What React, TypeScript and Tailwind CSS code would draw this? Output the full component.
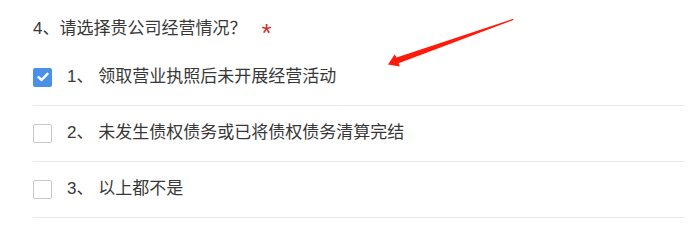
import { useState } from "react";

const options = [
  { id: 1, label: "领取营业执照后未开展经营活动" },
  { id: 2, label: "未发生债权债务或已将债权债务清算完结" },
  { id: 3, label: "以上都不是" },
];

function CheckBox({ checked }: { checked: boolean }) {
  if (checked) {
    return (
      <span className="flex h-[19px] w-[19px] shrink-0 items-center justify-center rounded-[2px] bg-[#4a90e6]">
        <svg width="12" height="10" viewBox="0 0 12 10" fill="none">
          <path d="M1.5 5.2 L4.6 8 L10.5 1.8" stroke="#fff" strokeWidth="2.4" strokeLinecap="round" strokeLinejoin="round" />
        </svg>
      </span>
    );
  }
  return <span className="h-[19px] w-[19px] shrink-0 rounded-[2px] border border-[#c9c9c9] bg-white" />;
}

export default function App() {
  const [selected, setSelected] = useState<number[]>([1]);

  const toggle = (id: number) => {
    setSelected((prev) => (prev.includes(id) ? prev.filter((x) => x !== id) : [...prev, id]));
  };

  return (
    <div
      className="relative h-[238px] w-[697px] bg-white text-[#383838]"
      style={{ fontFamily: '"Liberation Sans", "Noto Sans CJK SC", sans-serif' }}
    >
      <div className="ml-[33px] mr-[12px] pt-[17px]">
        {/* Question title */}
        <div className="flex h-[24px] items-center text-[17px] leading-[24px]">
          <span>4、请选择贵公司经营情况？</span>
          <span className="ml-[15px] mt-[8px] text-[26px] leading-none text-[#d92a2a]">*</span>
        </div>

        {/* Options */}
        <div className="mt-[9px]">
          {options.map((opt) => (
            <div
              key={opt.id}
              className="flex h-[56px] cursor-pointer items-center border-b border-[#e9e9e9] pb-[1px]"
              onClick={() => toggle(opt.id)}
            >
              <CheckBox checked={selected.includes(opt.id)} />
              <span className="ml-[15px] text-[17px] leading-[24px]">
                {opt.id}、 {opt.label}
              </span>
            </div>
          ))}
        </div>
      </div>

      {/* Annotation arrow */}
      <svg className="pointer-events-none absolute left-0 top-0" width="697" height="238" viewBox="0 0 697 238">
        <polygon
          points="513,18.8 396.6,57.6 394.6,54.6 388,64.5 399.8,66.6 398.6,63.2 513.4,20"
          fill="#ff1a0a"
        />
      </svg>
    </div>
  );
}
